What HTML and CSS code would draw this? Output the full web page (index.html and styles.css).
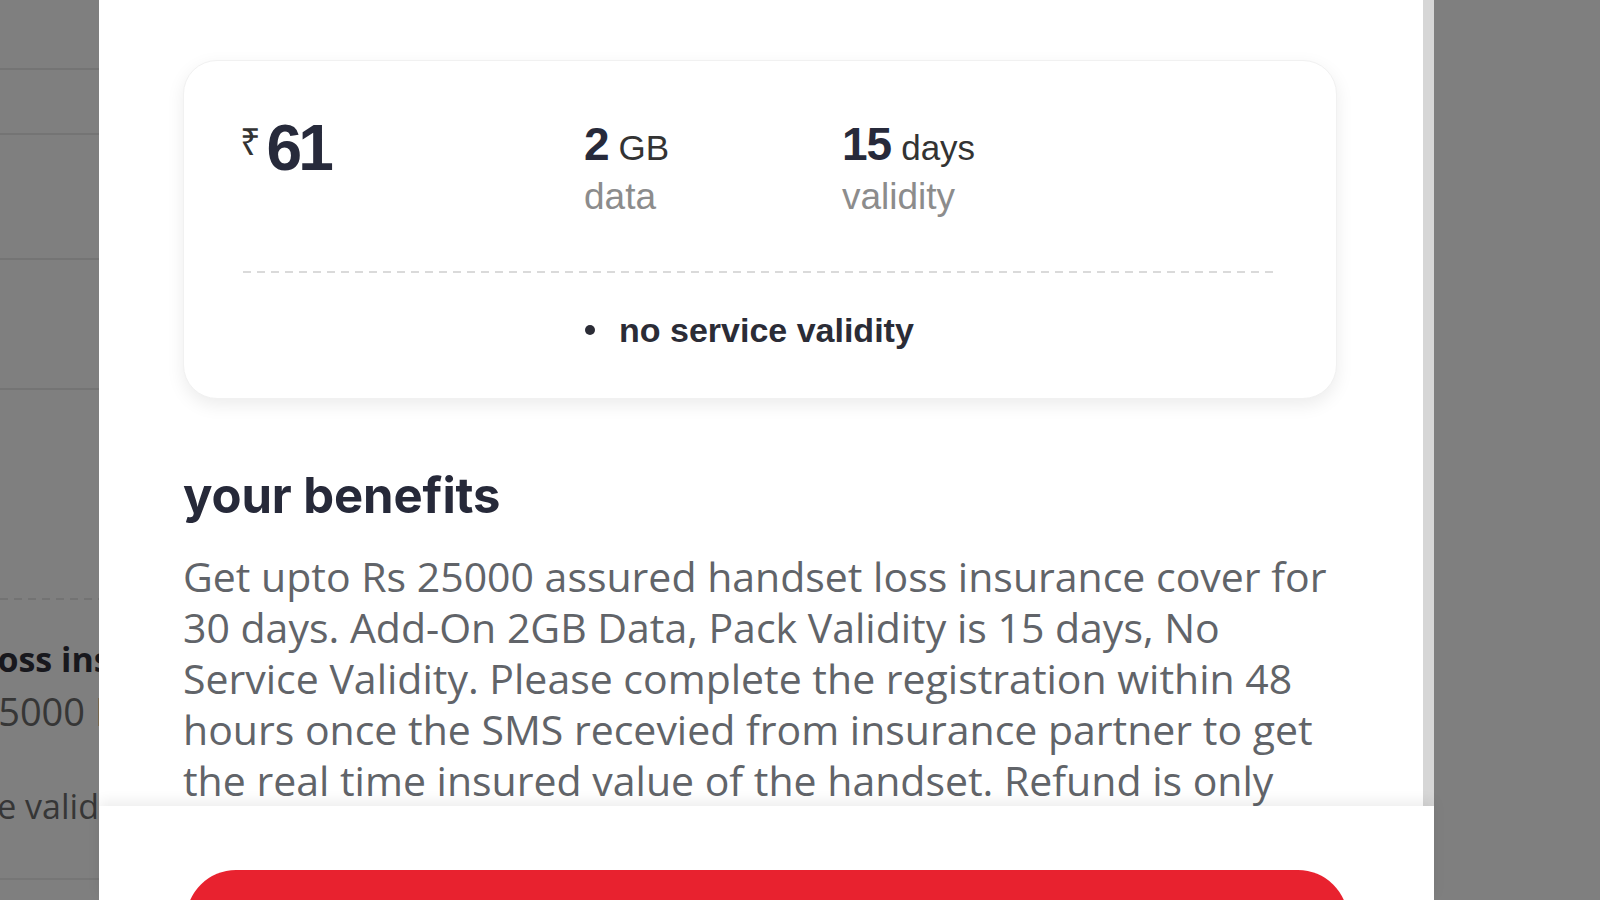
FILE: index.html
```html
<!DOCTYPE html>
<html lang="en">
<head>
<meta charset="utf-8">
<title>Pack details</title>
<link rel="stylesheet" href="styles.css">
</head>
<body>
<div class="page">
  <div class="backdrop backdrop-left">
    <div class="bg-cell c1"></div>
    <div class="bg-cell c2"></div>
    <div class="bg-cell c3"></div>
    <div class="bg-cell c4"></div>
    <div class="bg-block">
      <div class="bg-dash"></div>
      <div class="bg-line bg-title"><span>loss insurance cover</span></div>
      <div class="bg-line bg-sub"><span>Rs 25000 In</span></div>
      <div class="bg-line bg-valid"><span>no service validity</span></div>
    </div>
  </div>

  <div class="modal">
    <div class="scroll">
      <div class="scroll-content">
        <div class="card">
          <div class="card-top">
            <div class="price"><span class="rupee">₹</span><span class="amount">61</span></div>
            <div class="stat stat-data">
              <div class="stat-main"><span class="num">2</span><span class="unit">GB</span></div>
              <div class="stat-label">data</div>
            </div>
            <div class="stat">
              <div class="stat-main"><span class="num">15</span><span class="unit">days</span></div>
              <div class="stat-label">validity</div>
            </div>
          </div>
          <div class="divider"></div>
          <ul class="features">
            <li>no service validity</li>
          </ul>
        </div>

        <h2 class="benefits-title">your benefits</h2>
        <p class="benefits-text">Get upto Rs 25000 assured handset loss insurance cover for 30 days. Add-On 2GB Data, Pack Validity is 15 days, No Service Validity. Please complete the registration within 48 hours once the SMS recevied from insurance partner to get the real time insured value of the handset. Refund is only applicable as per the terms and conditions of the insurance partner.</p>
      </div>
      <div class="scrollbar"></div>
    </div>
    <div class="footer">
      <button class="cta" type="button">buy now</button>
    </div>
  </div>

  <div class="backdrop backdrop-right"></div>
</div>
</body>
</html>
```

FILE: styles.css
```css
* {
  box-sizing: border-box;
}

html, body {
  margin: 0;
  padding: 0;
}

body {
  width: 1600px;
  height: 900px;
  overflow: hidden;
  background: #7f7f7f;
  font-family: "Open Sans", "Noto Sans", sans-serif;
}

.page {
  display: flex;
  width: 1600px;
  height: 900px;
}

/* ---------- dimmed page behind the sheet ---------- */
.backdrop {
  background: #7f7f7f;
  height: 900px;
}

.backdrop-left {
  width: 99px;
  flex: 0 0 99px;
  overflow: hidden;
  display: flex;
  flex-direction: column;
}

.backdrop-right {
  flex: 1;
}

.bg-cell {
  border-bottom: 2px solid #747474;
}

.c1 { height: 70px; }
.c2 { height: 65px; }
.c3 { height: 125px; }
.c4 { height: 130px; }

.bg-block {
  flex: 1;
  display: flex;
  flex-direction: column;
  padding-top: 208px;
  border-bottom: 2px solid #767676;
  max-height: 490px;
}

.bg-dash {
  height: 2px;
  background: repeating-linear-gradient(90deg, #737373 0 8px, transparent 8px 14px);
}

.bg-line {
  white-space: nowrap;
  line-height: 40px;
  font-size: 34px;
}

.bg-title {
  margin-top: 39px;
  font-weight: 700;
  color: #18181d;
}

.bg-title span { margin-left: -13px; }

.bg-sub {
  margin-top: 12px;
  font-size: 38px;
  color: #363636;
}

.bg-sub span { margin-left: -75px; }

.bg-valid {
  margin-top: 55px;
  color: #363636;
}

.bg-valid span { margin-left: -144px; }

/* ---------- sheet ---------- */
.modal {
  width: 1335px;
  flex: 0 0 1335px;
  height: 900px;
  background: #ffffff;
  display: flex;
  flex-direction: column;
}

.scroll {
  flex: 1;
  display: flex;
  overflow: hidden;
}

.scroll-content {
  flex: 1;
  padding: 60px 60px 0 84px;
  overflow: hidden;
}

.scrollbar {
  width: 11px;
  flex: 0 0 11px;
  background: #d6d6d6;
}

/* ---------- plan card ---------- */
.card {
  width: 1154px;
  border-radius: 34px;
  background: #ffffff;
  border: 1px solid #f1f1f1;
  box-shadow: 0 6px 18px rgba(0, 0, 0, 0.08);
  padding: 55px 55px 48px 56px;
  font-family: "Liberation Sans", Arial, sans-serif;
  color: #272a3b;
}

.card-top {
  display: flex;
  align-items: flex-start;
  height: 107px;
}

.price {
  width: 344px;
  display: flex;
  align-items: flex-start;
}

.rupee {
  font-family: "Noto Sans", "DejaVu Sans", sans-serif;
  font-size: 36px;
  line-height: 36px;
  margin-top: 8px;
  margin-right: 6px;
  color: #333333;
}

.amount {
  font-size: 64px;
  line-height: 64px;
  font-weight: 700;
  letter-spacing: -4px;
}

.stat {
  margin-top: 5px;
}

.stat-data {
  width: 258px;
}

.stat-main {
  display: flex;
  align-items: baseline;
  line-height: 46px;
}

.num {
  font-size: 46px;
  font-weight: 700;
  letter-spacing: -1px;
}

.unit {
  font-size: 35px;
  color: #333333;
  margin-left: 10px;
}

.stat-label {
  font-size: 37px;
  line-height: 52px;
  color: #8c8c8c;
}

.divider {
  height: 2px;
  margin: 48px 4px 0 3px;
  background: repeating-linear-gradient(90deg, #dadada 0 8px, transparent 8px 14px);
}

.features {
  list-style: none;
  margin: 37px 0 0 0;
  padding: 0 0 0 345px;
}

.features li {
  display: flex;
  align-items: center;
  font-size: 34px;
  line-height: 40px;
  font-weight: 700;
  color: #2b2c36;
}

.features li::before {
  content: "";
  width: 10px;
  height: 10px;
  border-radius: 50%;
  background: #2b2c36;
  margin-right: 24px;
}

/* ---------- benefits ---------- */
.benefits-title {
  margin: 68px 0 0 0;
  font-family: "Inter", sans-serif;
  font-size: 49px;
  line-height: 58px;
  font-weight: 700;
  color: #262939;
  letter-spacing: -0.1px;
}

.benefits-text {
  margin: 26px 0 0 0;
  width: 1154px;
  font-family: "Open Sans", sans-serif;
  font-size: 41px;
  line-height: 51px;
  color: #616469;
}

/* ---------- footer ---------- */
.footer {
  position: relative;
  height: 94px;
  flex: 0 0 94px;
  background: #ffffff;
  box-shadow: 0 -5px 12px rgba(0, 0, 0, 0.07);
  padding: 64px 86px 0 87px;
  overflow: hidden;
}

.cta {
  display: block;
  width: 100%;
  height: 100px;
  border: none;
  border-radius: 50px;
  background: #e8222f;
  color: #ffffff;
  font-family: "Open Sans", sans-serif;
  font-size: 36px;
  font-weight: 700;
}
```
